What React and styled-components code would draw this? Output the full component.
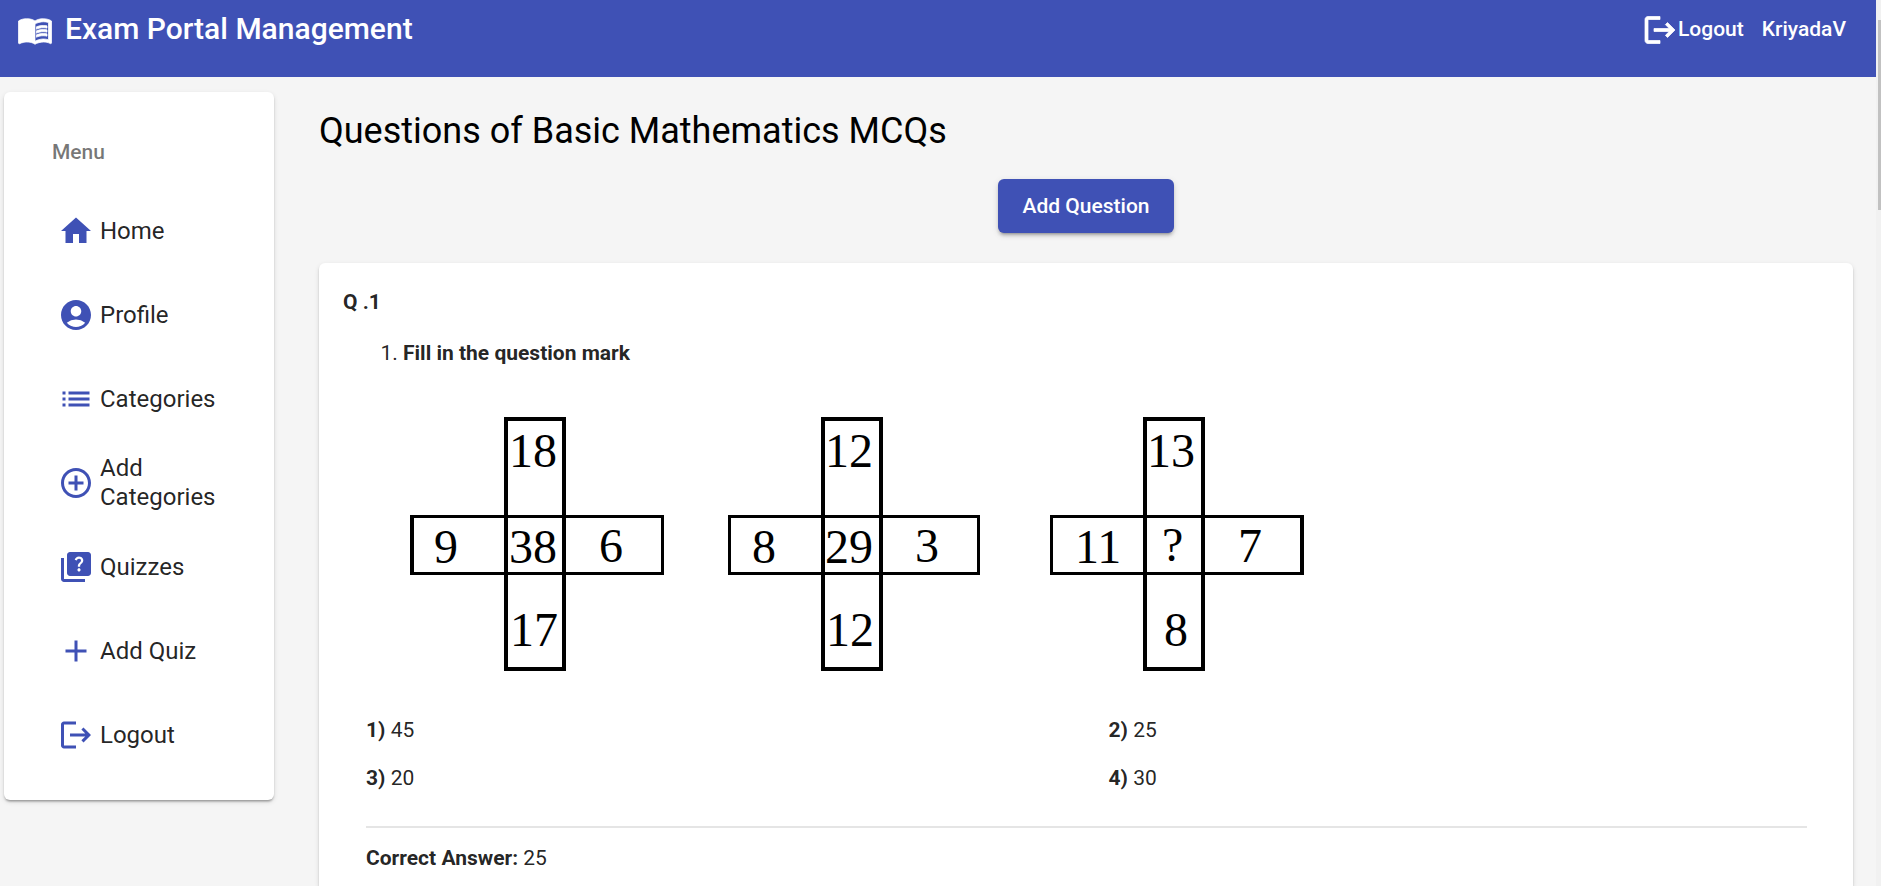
import React from "react";
import styled, { createGlobalStyle, css } from "styled-components";
import {
  MdMenuBook,
  MdHome,
  MdAccountCircle,
  MdList,
  MdAddCircleOutline,
  MdQuiz,
  MdAdd,
  MdLogout,
} from "react-icons/md";

const colors = {
  primary: "#3f51b5",
  page: "#f5f5f5",
  text: "rgba(0, 0, 0, 0.87)",
  muted: "rgba(0, 0, 0, 0.54)",
  divider: "#e5e5e5",
};

const GlobalStyle = createGlobalStyle`
  *, *::before, *::after { box-sizing: border-box; }
  body {
    margin: 0;
    background: ${colors.page};
    color: ${colors.text};
    font: 400 21px/30px Roboto, "Liberation Sans", sans-serif;
  }
`;

const Shell = styled.div`
  display: flex;
  min-height: 100vh;
`;

const Page = styled.div`
  flex: 1;
  min-width: 0;
  display: flex;
  flex-direction: column;
`;

const ScrollTrack = styled.div`
  width: 5px;
  padding: 20px 0 0 2px;
  background: #f1f1f1;
`;

const ScrollThumb = styled.div`
  height: 190px;
  background: #c1c1c1;
`;

const Toolbar = styled.header`
  display: flex;
  justify-content: space-between;
  height: 77px;
  padding: 0 30px 19px 17px;
  background: ${colors.primary};
  color: #fff;
  font-weight: 500;
`;

const Brand = styled.a`
  display: flex;
  align-items: center;
  gap: 12px;
  color: inherit;
  text-decoration: none;
  font-size: 30px;
`;

const boldIcon = css`
  width: 36px;
  height: 36px;
  margin-top: 2px;
  stroke: currentColor;
  stroke-width: 0.5;

  path[fill="none"] {
    stroke: none;
  }
`;

const BrandIcon = styled(MdMenuBook)`
  ${boldIcon}
`;

const ToolbarLogoutIcon = styled(MdLogout)`
  ${boldIcon}
`;

const Account = styled.div`
  display: flex;
  align-items: center;
  gap: 18px;
`;

const ToolbarButton = styled.button`
  display: flex;
  align-items: center;
  padding: 0;
  border: 0;
  background: none;
  color: inherit;
  font: inherit;
`;

const Body = styled.div`
  flex: 1;
  display: flex;
  align-items: stretch;
`;

const cardLook = css`
  background: #fff;
  border-radius: 6px;
  box-shadow: 0 3px 2px -2px rgba(0, 0, 0, 0.2), 0 2px 2px rgba(0, 0, 0, 0.14),
    0 2px 5px rgba(0, 0, 0, 0.12);
`;

const Sidebar = styled.nav`
  ${cardLook}
  align-self: flex-start;
  flex: none;
  width: 270px;
  margin: 15px 0 24px 4px;
  padding: 24px 24px 23px;
`;

const MenuTitle = styled.h2`
  margin: 0;
  padding: 21px 24px 22px;
  font-size: 21px;
  line-height: 30px;
  font-weight: 500;
  color: ${colors.muted};
`;

const MenuList = styled.ul`
  margin: 0;
  padding: 0;
  list-style: none;
`;

const MenuLink = styled.a`
  display: flex;
  align-items: center;
  gap: 6px;
  height: 84px;
  padding: 0 24px 0 30px;
  color: ${colors.text};
  font-size: 24px;
  line-height: 29px;
  text-decoration: none;

  svg {
    flex: none;
    width: 36px;
    height: 36px;
    color: ${colors.primary};
  }
`;

const Main = styled.main`
  flex: 1;
  min-width: 0;
  display: flex;
  flex-direction: column;
  padding: 30px 23px 0 45px;
`;

const PageTitle = styled.h1`
  margin: 0 0 24px;
  font-size: 36px;
  line-height: 48px;
  font-weight: 400;
  color: #000;
`;

const AddButton = styled.button`
  align-self: center;
  height: 54px;
  margin-bottom: 30px;
  padding: 0 25px;
  border: 0;
  border-radius: 6px;
  background: ${colors.primary};
  color: #fff;
  font: inherit;
  font-weight: 500;
  box-shadow: 0 4px 2px -3px rgba(0, 0, 0, 0.2), 0 3px 3px rgba(0, 0, 0, 0.14),
    0 2px 7px rgba(0, 0, 0, 0.12);
`;

const QuestionCard = styled.article`
  ${cardLook}
  flex: 1;
  padding: 24px 24px 12px;
  border-radius: 6px 6px 0 0;
`;

const QuestionNumber = styled.h3`
  margin: 0 0 21px;
  font-size: 21px;
  line-height: 30px;
  font-weight: 700;
`;

const QuestionList = styled.ol`
  margin: 0;
  padding-left: 60px;
`;

const QuestionBody = styled.div`
  padding: 0 22px 0 23px;
`;

const Diagram = styled.svg`
  display: block;
  width: 100%;
  max-width: 960px;
  font: 48px "Liberation Serif", serif;
`;

const Options = styled.div`
  display: grid;
  grid-template-columns: 1fr 1fr;
  column-gap: 44px;
  line-height: 48px;
`;

const Divider = styled.hr`
  height: 2px;
  margin: 24px 0 15px;
  border: 0;
  background: ${colors.divider};
`;

const Answer = styled.p`
  margin: 0;
`;

const menu = [
  { label: "Home", Icon: MdHome },
  { label: "Profile", Icon: MdAccountCircle },
  { label: "Categories", Icon: MdList },
  { label: "Add Categories", Icon: MdAddCircleOutline },
  { label: "Quizzes", Icon: MdQuiz },
  { label: "Add Quiz", Icon: MdAdd },
  { label: "Logout", Icon: MdLogout },
];

/* Each cross: its left edge, bar width, column start and [text, x, baseline] labels. */
const crosses = [
  {
    x: 44,
    width: 254,
    column: 94,
    thickEdge: 0,
    labels: [["18", 99, 50], ["9", 24, 146], ["38", 99, 146], ["6", 189, 145], ["17", 100, 229]],
  },
  {
    x: 362,
    width: 252,
    column: 93,
    labels: [["12", 97, 50], ["8", 24, 146], ["29", 97, 146], ["3", 187, 145], ["12", 98, 229]],
  },
  {
    x: 684,
    width: 254,
    column: 93,
    thickEdge: 250,
    labels: [["13", 97, 50], ["11", 25, 146], ["?", 112, 144], ["7", 188, 145], ["8", 114, 229]],
  },
];

const options = ["45", "25", "20", "30"];

function NumberCrosses() {
  return (
    <Diagram viewBox="0 0 960 338" role="img" aria-label="Three number crosses">
      {crosses.map((cross) => (
        <g key={cross.x} transform={`translate(${cross.x} 49)`}>
          <g fill="none" stroke="#000">
            <rect x="1.5" y="99.5" width={cross.width - 3} height="57" strokeWidth="3" />
            <rect x={cross.column + 2} y="2" width="58" height="250" strokeWidth="4" />
          </g>
          {cross.thickEdge !== undefined && (
            <rect x={cross.thickEdge} y="98" width="4" height="60" />
          )}
          {cross.labels.map(([text, x, y]) => (
            <text key={`${text}-${y}`} x={x} y={y}>
              {text}
            </text>
          ))}
        </g>
      ))}
    </Diagram>
  );
}

export default function App() {
  return (
    <>
      <GlobalStyle />
      <Shell>
        <Page>
          <Toolbar>
            <Brand href="#home">
              <BrandIcon aria-hidden="true" />
              <span>Exam Portal Management</span>
            </Brand>
            <Account>
              <ToolbarButton type="button">
                <ToolbarLogoutIcon aria-hidden="true" />
                Logout
              </ToolbarButton>
              <ToolbarButton type="button">KriyadaV</ToolbarButton>
            </Account>
          </Toolbar>
          <Body>
            <Sidebar>
              <MenuTitle>Menu</MenuTitle>
              <MenuList>
                {menu.map(({ label, Icon }) => (
                  <li key={label}>
                    <MenuLink href="#menu">
                      <Icon aria-hidden="true" />
                      <span>{label}</span>
                    </MenuLink>
                  </li>
                ))}
              </MenuList>
            </Sidebar>
            <Main>
              <PageTitle>Questions of Basic Mathematics MCQs</PageTitle>
              <AddButton type="button">Add Question</AddButton>
              <QuestionCard>
                <QuestionNumber>Q .1</QuestionNumber>
                <QuestionList>
                  <li>
                    <strong>Fill in the question mark</strong>
                  </li>
                </QuestionList>
                <QuestionBody>
                  <NumberCrosses />
                  <Options>
                    {options.map((option, index) => (
                      <span key={option}>
                        <strong>{index + 1})</strong> {option}
                      </span>
                    ))}
                  </Options>
                  <Divider />
                  <Answer>
                    <strong>Correct Answer:</strong> {options[1]}
                  </Answer>
                </QuestionBody>
              </QuestionCard>
            </Main>
          </Body>
        </Page>
        <ScrollTrack>
          <ScrollThumb />
        </ScrollTrack>
      </Shell>
    </>
  );
}
